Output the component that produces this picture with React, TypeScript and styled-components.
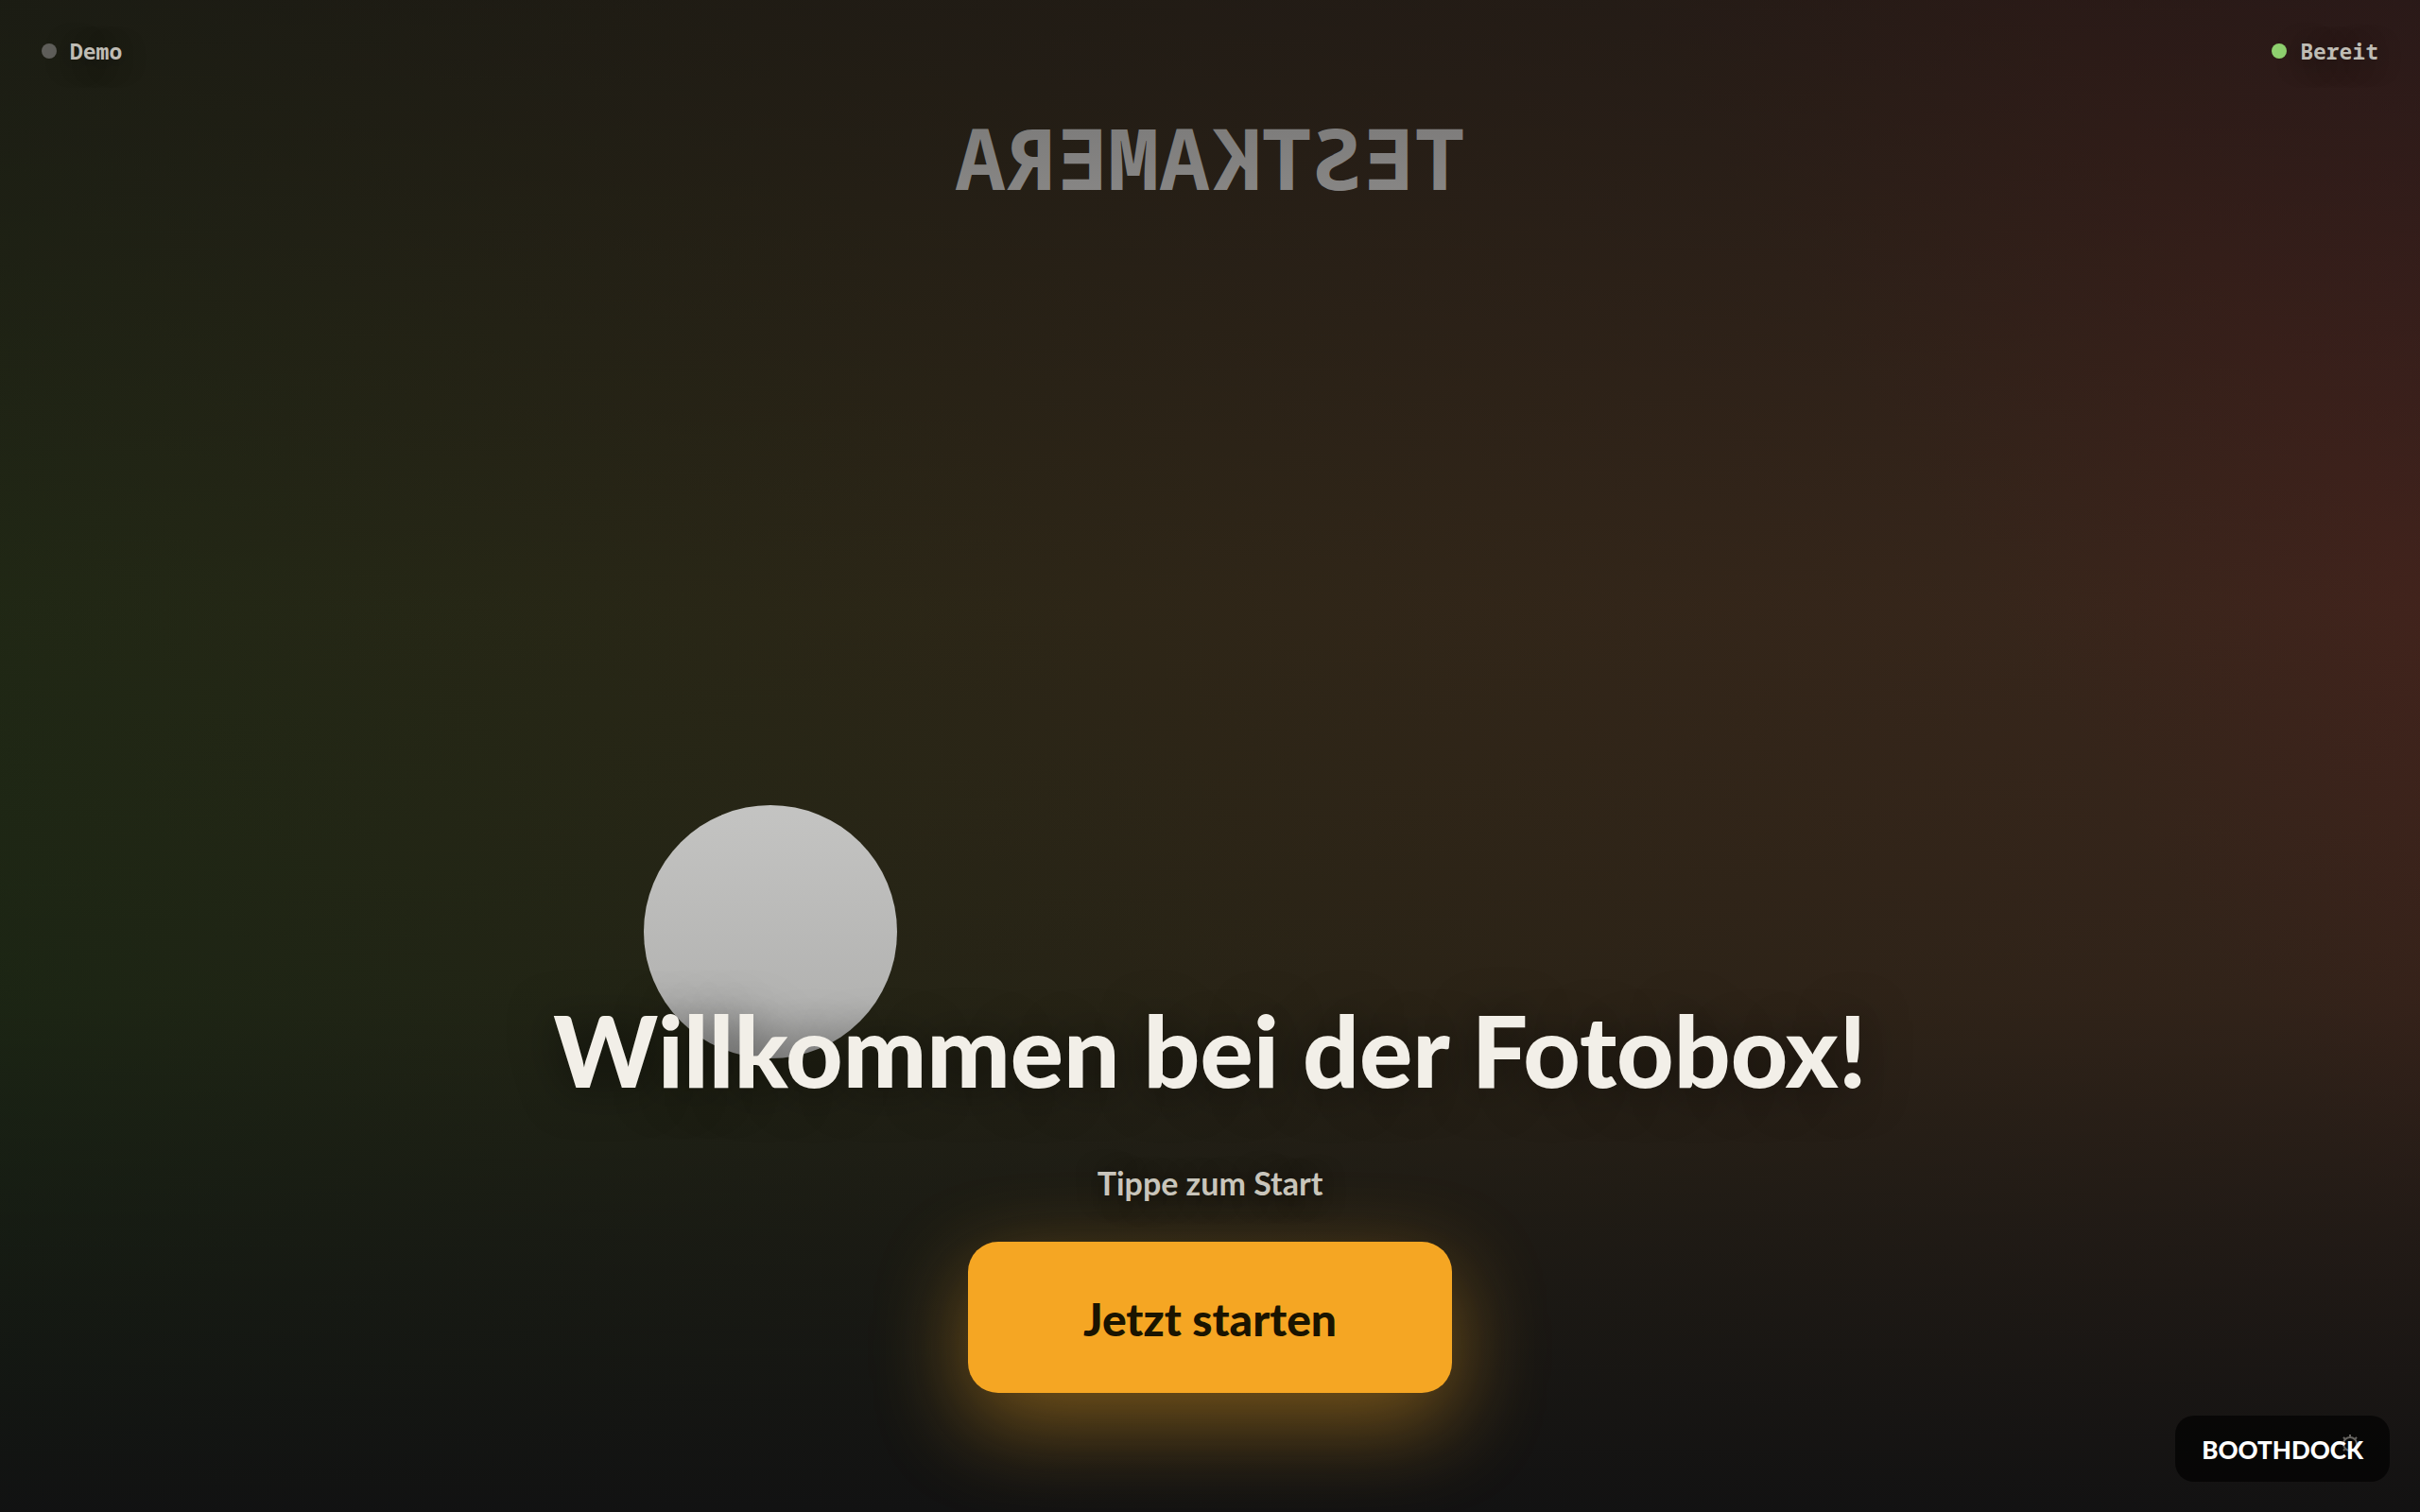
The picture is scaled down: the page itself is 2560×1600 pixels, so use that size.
import React from 'react';
import styled, { createGlobalStyle } from 'styled-components';

const GlobalStyle = createGlobalStyle`
  *, *::before, *::after { box-sizing: border-box; }
  body {
    margin: 0;
    background: #111113;
    color: #f2efe8;
    font-family: Lato, "Open Sans", sans-serif;
  }
`;

const Screen = styled.main`
  position: relative;
  isolation: isolate;
  min-height: 100vh;
  display: flex;
  flex-direction: column;
  justify-content: space-between;
  overflow: hidden;
`;

const Camera = styled.div`
  position: absolute;
  inset: 0;
  z-index: -1;
  display: flex;
  justify-content: center;
  align-items: flex-start;
  padding-top: 114px;
  transform: scaleX(-1);
  background: linear-gradient(
    122deg,
    rgb(74, 36, 33) 0%,
    rgb(73, 38, 30) 11%,
    rgb(60, 41, 28) 24%,
    rgb(50, 41, 24) 50%,
    rgb(27, 44, 20) 100%
  );

  &::after {
    content: '';
    position: absolute;
    inset: 0;
    background: linear-gradient(
      to bottom,
      rgba(17, 17, 17, 0.56) 0%,
      rgba(17, 17, 17, 0.14) 40%,
      rgba(17, 17, 17, 0.18) 54%,
      rgba(17, 17, 17, 0.25) 66%,
      rgba(17, 17, 18, 0.6) 81%,
      rgba(17, 17, 18, 0.96) 100%
    );
  }
`;

const CameraLabel = styled.span`
  font: 700 90px/104px "Noto Sans Mono", "DejaVu Sans Mono", monospace;
  color: rgba(255, 255, 255, 0.87);
`;

const Ball = styled.div`
  position: absolute;
  right: 31.85%;
  top: 61.6%;
  width: 268px;
  height: 268px;
  border-radius: 50%;
  transform: translate(50%, -50%);
  background: rgba(255, 255, 255, 0.9);
`;

const StatusBar = styled.header`
  display: flex;
  justify-content: space-between;
  padding: 40px 44px;
`;

const Status = styled.div`
  display: flex;
  align-items: center;
  gap: 14px;
  font: 700 23px/28px "Noto Sans Mono", "DejaVu Sans Mono", monospace;
  color: #bfbcb4;
  text-shadow: 0 4px 24px rgba(0, 0, 0, 0.5);
`;

const Dot = styled.span<{ $ready?: boolean }>`
  width: 16px;
  height: 16px;
  border-radius: 50%;
  background: ${(p) => (p.$ready ? '#8fd16f' : '#5f5e5a')};
`;

const Hero = styled.section`
  display: flex;
  flex-direction: column;
  align-items: center;
  padding-bottom: 126px;
  text-align: center;
`;

const Title = styled.h1`
  margin: 0 0 64px;
  font-weight: 900;
  font-size: 105px;
  line-height: 112px;
  text-shadow: 0 4px 48px rgba(0, 0, 0, 0.55);
`;

const Hint = styled.p`
  margin: 0 0 40px;
  font-weight: 700;
  font-size: 34px;
  line-height: 44px;
  color: #c9c6bd;
  text-shadow: 0 4px 24px rgba(0, 0, 0, 0.5);
`;

const StartButton = styled.button`
  min-width: 512px;
  min-height: 160px;
  padding: 4px 64px 0;
  border: 0;
  border-radius: 32px;
  background: #f5a623;
  color: #1a1400;
  font: inherit;
  font-weight: 900;
  font-size: 48px;
  line-height: 56px;
  cursor: pointer;
  box-shadow: 0 32px 96px rgba(245, 166, 35, 0.45);
`;

const Badge = styled.div`
  position: absolute;
  right: 32px;
  bottom: 32px;
  padding: 19px 28px 17px;
  border-radius: 20px;
  background: rgba(0, 0, 0, 0.65);
`;

const BadgeName = styled.span`
  position: relative;
  display: block;
  font-weight: 900;
  font-size: 26px;
  line-height: 34px;
  color: #ffffff;
`;

const SettingsButton = styled.button`
  position: absolute;
  right: 32px;
  bottom: 30px;
  display: grid;
  padding: 0;
  border: 0;
  background: none;
  color: #65635f;
`;

const TEETH = [0, 45, 90, 135, 180, 225, 270, 315];

export default function App() {
  return (
    <>
      <GlobalStyle />
      <Screen>
        <Camera>
          <Ball />
          <CameraLabel>TESTKAMERA</CameraLabel>
        </Camera>
        <StatusBar>
          <Status>
            <Dot />
            Demo
          </Status>
          <Status>
            <Dot $ready />
            Bereit
          </Status>
        </StatusBar>
        <Hero>
          <Title>Willkommen bei der Fotobox!</Title>
          <Hint>Tippe zum Start</Hint>
          <StartButton type="button">Jetzt starten</StartButton>
        </Hero>
        <Badge>
          <SettingsButton type="button" aria-label="Einstellungen">
            <svg width="20" height="20" viewBox="0 0 20 20" fill="none" stroke="currentColor" strokeWidth="2">
              <circle cx="10" cy="10" r="7" />
              {TEETH.map((a) => (
                <path key={a} d="M10 0v3" transform={`rotate(${a} 10 10)`} />
              ))}
            </svg>
          </SettingsButton>
          <BadgeName>BOOTHDOCK</BadgeName>
        </Badge>
      </Screen>
    </>
  );
}
